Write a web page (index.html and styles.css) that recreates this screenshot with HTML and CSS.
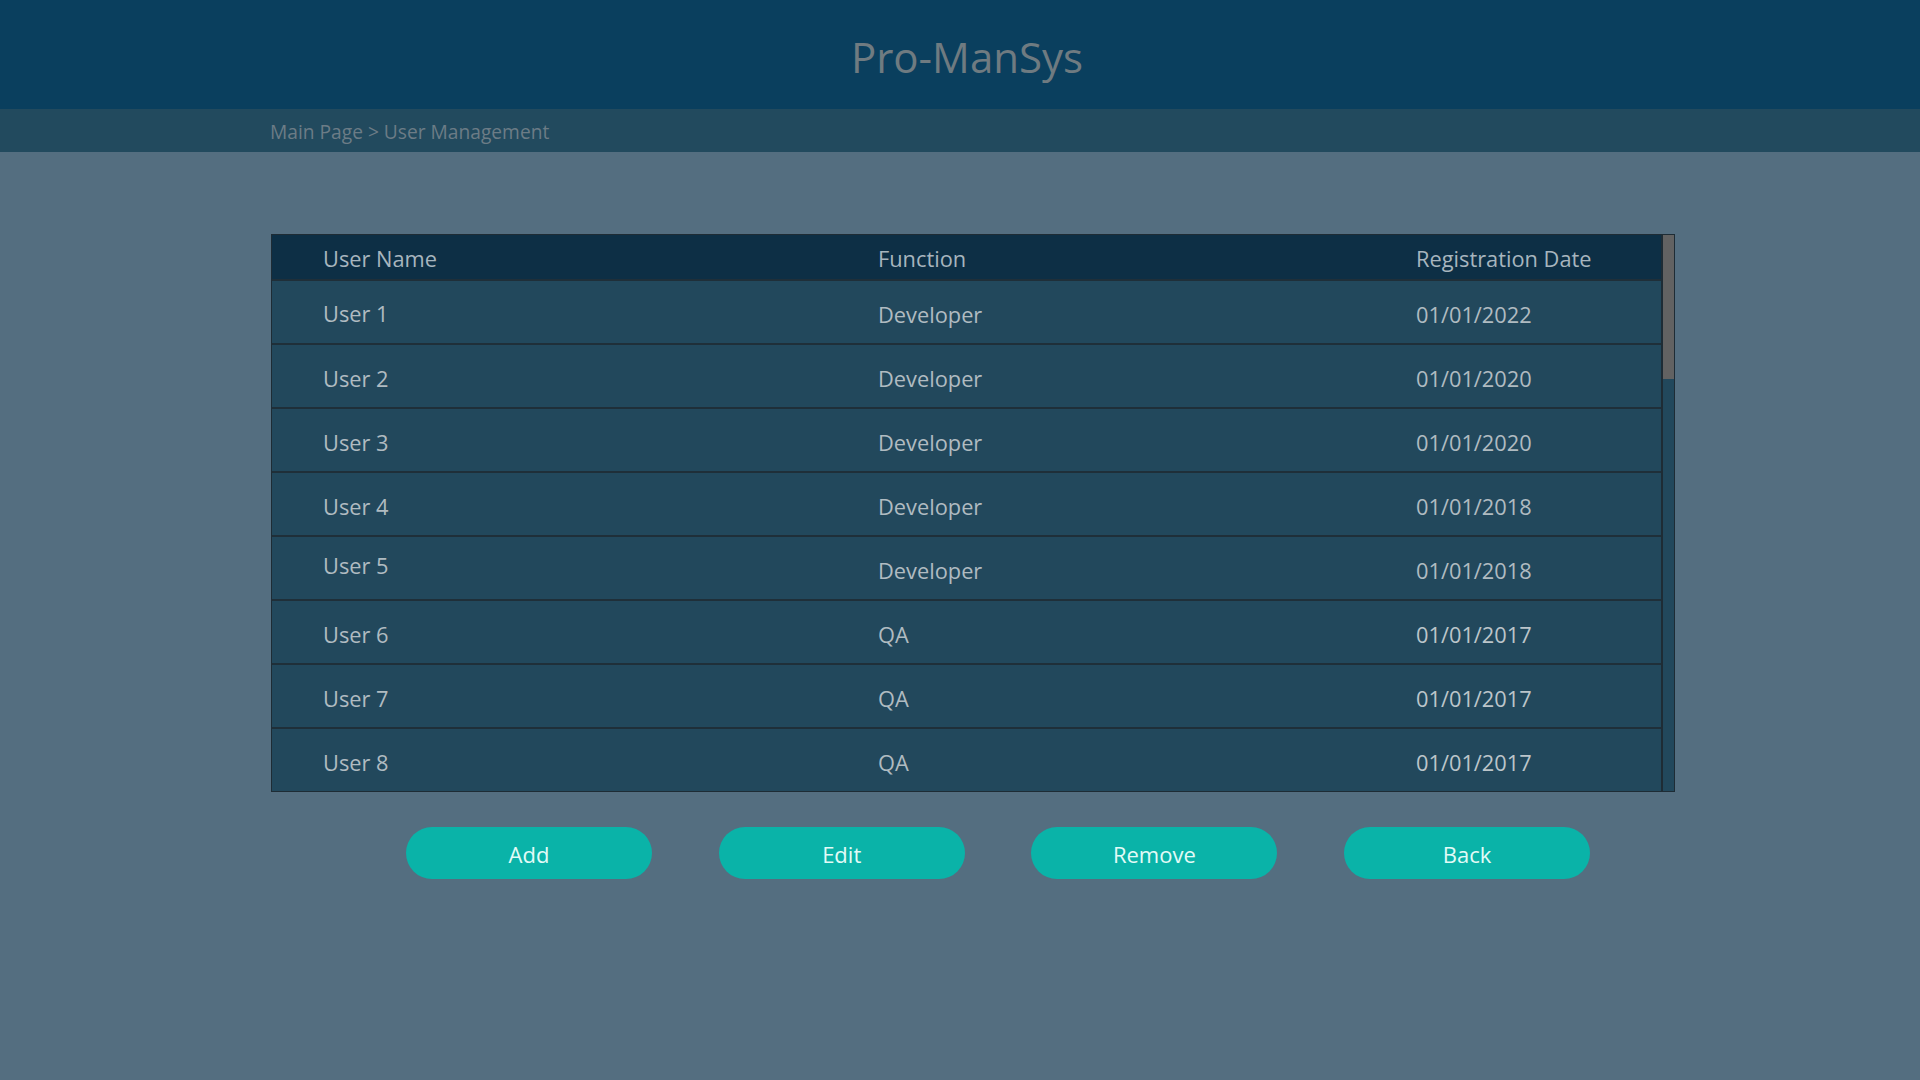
FILE: index.html
```html
<!DOCTYPE html>
<html lang="en">
<head>
<meta charset="utf-8">
<title>Pro-ManSys - User Management</title>
<link rel="stylesheet" href="styles.css">
</head>
<body>
<header class="topbar">
  <h1 class="title">Pro-ManSys</h1>
</header>
<nav class="crumbs">
  <div class="crumbs-inner">Main Page &gt; User Management</div>
</nav>
<main class="content">
  <div class="table">
    <div class="table-body">
      <div class="row head">
        <div class="cell">User Name</div>
        <div class="cell">Function</div>
        <div class="cell">Registration Date</div>
      </div>
      <div class="row">
        <div class="cell up1">User 1</div>
        <div class="cell">Developer</div>
        <div class="cell">01/01/2022</div>
      </div>
      <div class="row">
        <div class="cell">User 2</div>
        <div class="cell">Developer</div>
        <div class="cell">01/01/2020</div>
      </div>
      <div class="row">
        <div class="cell">User 3</div>
        <div class="cell">Developer</div>
        <div class="cell">01/01/2020</div>
      </div>
      <div class="row">
        <div class="cell">User 4</div>
        <div class="cell">Developer</div>
        <div class="cell">01/01/2018</div>
      </div>
      <div class="row">
        <div class="cell up5">User 5</div>
        <div class="cell">Developer</div>
        <div class="cell">01/01/2018</div>
      </div>
      <div class="row">
        <div class="cell">User 6</div>
        <div class="cell">QA</div>
        <div class="cell bright">01/01/2017</div>
      </div>
      <div class="row">
        <div class="cell">User 7</div>
        <div class="cell">QA</div>
        <div class="cell bright">01/01/2017</div>
      </div>
      <div class="row">
        <div class="cell">User 8</div>
        <div class="cell">QA</div>
        <div class="cell bright">01/01/2017</div>
      </div>
    </div>
    <div class="scrollbar"><div class="thumb"></div></div>
  </div>
  <div class="actions">
    <button class="btn">Add</button>
    <button class="btn">Edit</button>
    <button class="btn">Remove</button>
    <button class="btn">Back</button>
  </div>
</main>
</body>
</html>
```
FILE: styles.css
```css
* { box-sizing: border-box; }
html, body {
  margin: 0;
  padding: 0;
  height: 100%;
}
body {
  background: #546e80;
  font-family: "Open Sans", "Noto Sans", sans-serif;
  min-height: 1080px;
}
.topbar {
  height: 109px;
  background: #0a3f5e;
  padding-top: 36px;
  padding-left: 14px;
}
.title {
  margin: 0;
  text-align: center;
  font-size: 42px;
  line-height: 41px;
  font-weight: 400;
  color: #6f7b81;
}
.crumbs {
  height: 43px;
  background: #224a5e;
  padding-top: 13px;
}
.crumbs-inner {
  margin-left: 270px;
  font-size: 19.2px;
  line-height: 20px;
  color: #6c7c86;
}
.content {
  margin-left: 271px;
  width: 1404px;
  padding-top: 82px;
}
.table {
  display: flex;
  border: 1px solid #1e2c35;
  background: #22485c;
}
.table-body {
  flex: 1;
}
.row {
  display: grid;
  grid-template-columns: 555px 538px 1fr;
  padding-left: 51px;
  height: 64px;
  border-top: 2px solid #1f2f39;
  padding-top: 23px;
  font-size: 21.8px;
  line-height: 22px;
  color: #b0bbc1;
}
.row.head {
  background: #0d2f45;
  border-top: 0;
  height: 44px;
  padding-top: 13px;
  color: #a7b5be;
}
.cell {
  white-space: nowrap;
}
.cell.up1 { margin-top: -1px; }
.cell.up5 { margin-top: -5px; }
.cell.bright { color: #bcc5ca; }
.scrollbar {
  width: 13px;
  border-left: 2px solid #1e2c35;
  background: #22485c;
}
.thumb {
  height: 144px;
  background: #626262;
}
.actions {
  display: flex;
  gap: 66.7px;
  padding-left: 135px;
  margin-top: 35px;
}
.btn {
  width: 246px;
  height: 52px;
  border: 0;
  border-radius: 26px;
  background: #0ab3a8;
  color: #e2fbf7;
  font-family: "Open Sans", "Noto Sans", sans-serif;
  font-size: 22px;
  line-height: 22px;
  padding: 2px 0 0 0;
  cursor: pointer;
}
```
